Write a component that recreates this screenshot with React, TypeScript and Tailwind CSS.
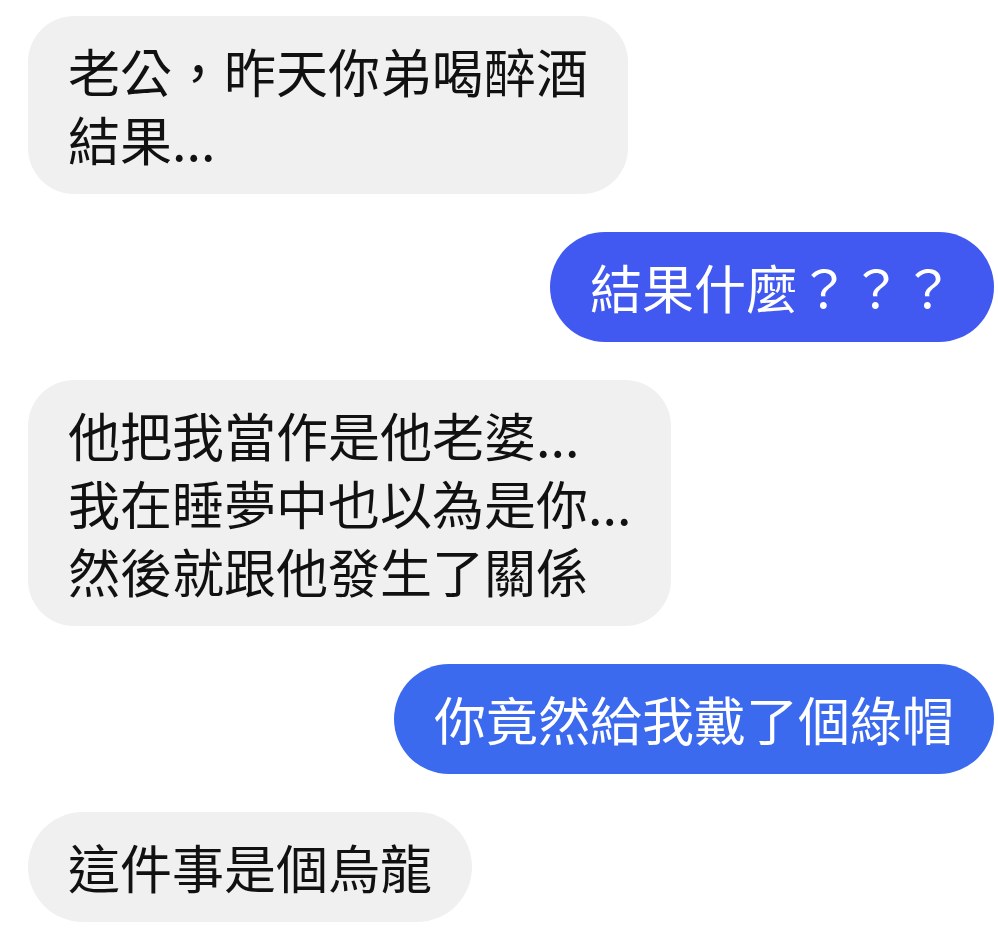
import React from 'react';

type Msg = { side: 'left' | 'right'; lines: string[]; tone?: 'violet' | 'azure' };

const messages: Msg[] = [
  { side: 'left', lines: ['老公，昨天你弟喝醉酒', '結果...'] },
  { side: 'right', lines: ['結果什麼？？？'], tone: 'violet' },
  { side: 'left', lines: ['他把我當作是他老婆...', '我在睡夢中也以為是你...', '然後就跟他發生了關係'] },
  { side: 'right', lines: ['你竟然給我戴了個綠帽'], tone: 'azure' },
  { side: 'left', lines: ['這件事是個烏龍'] },
];

function Bubble({ msg }: { msg: Msg }) {
  const single = msg.lines.length === 1;
  const base = 'px-10 py-[21px] text-[52px] leading-[68px] whitespace-nowrap';
  const shape = single ? 'rounded-full' : 'rounded-[46px]';
  const colour =
    msg.side === 'left'
      ? 'bg-[#f0f0f0] text-[#111111]'
      : msg.tone === 'violet'
        ? 'bg-[#4259f1] text-white'
        : 'bg-[#3b6aef] text-white';

  return (
    <div className={msg.side === 'left' ? 'flex justify-start pl-[28px]' : 'flex justify-end pr-[4px]'}>
      <div className={`${base} ${shape} ${colour}`}>
        {msg.lines.map((l, i) => (
          <div key={i}>{l}</div>
        ))}
      </div>
    </div>
  );
}

export default function App() {
  return (
    <div
      className="w-[998px] h-[941px] bg-white overflow-hidden flex flex-col gap-[38px] pt-4"
      style={{ fontFamily: '"Noto Sans CJK TC", "Noto Sans CJK SC", sans-serif' }}
    >
      {messages.map((m, i) => (
        <Bubble key={i} msg={m} />
      ))}
    </div>
  );
}
